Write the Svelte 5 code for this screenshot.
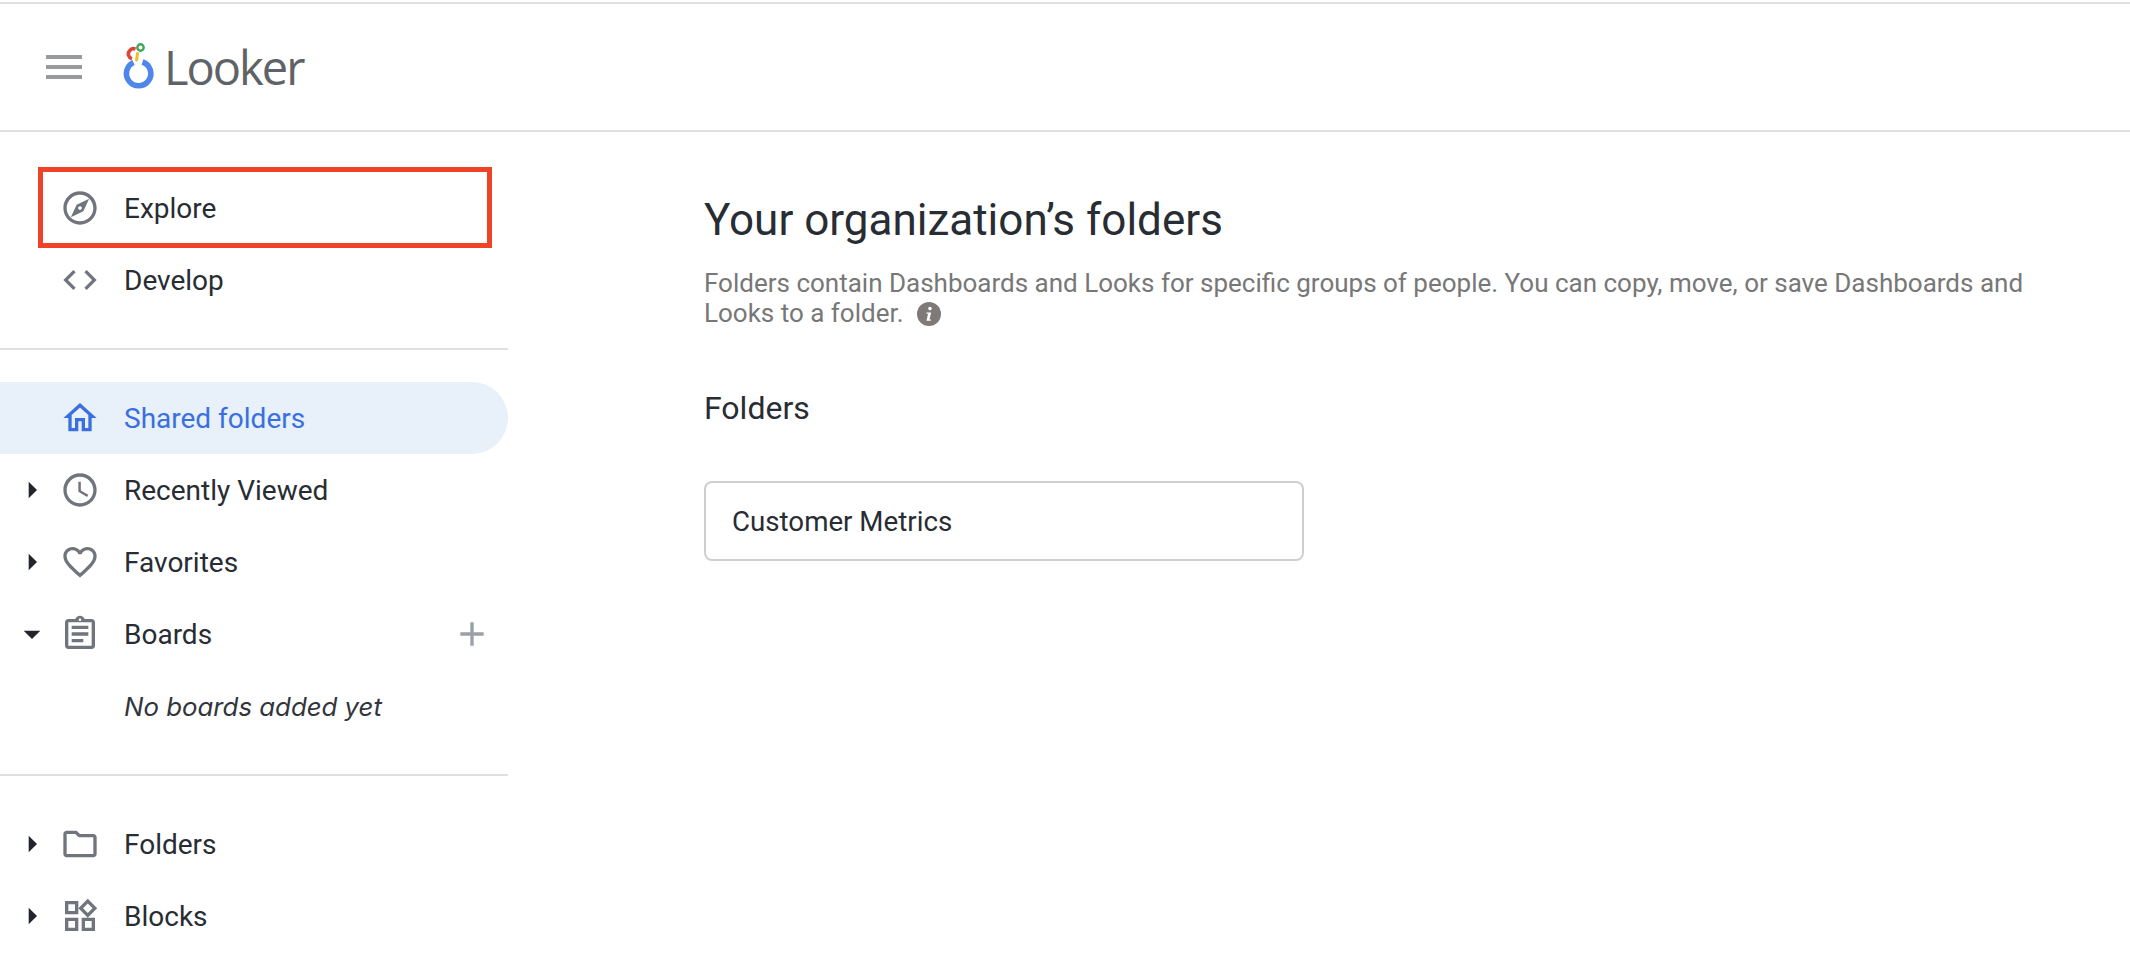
<script>
  const icons = {
    explore: "M12 2C6.48 2 2 6.48 2 12s4.48 10 10 10 10-4.48 10-10S17.52 2 12 2zm0 18c-4.41 0-8-3.59-8-8s3.59-8 8-8 8 3.59 8 8-3.59 8-8 8zm-5.5-2.5l7.51-3.49L17.5 6.5 9.99 9.99 6.5 17.5zm5.5-6.6c.61 0 1.1.49 1.1 1.1s-.49 1.1-1.1 1.1-1.1-.49-1.1-1.1.49-1.1 1.1-1.1z",
    code: "M9.4 16.6L4.8 12l4.6-4.6L8 6l-6 6 6 6 1.4-1.4zm5.2 0l4.6-4.6-4.6-4.6L16 6l6 6-6 6-1.4-1.4z",
    home: "M12 5.69l5 4.5V18h-2v-6H9v6H7v-7.81l5-4.5M12 3L2 12h3v8h6v-6h2v6h6v-8h3L12 3z",
    clock: "M11.99 2C6.47 2 2 6.48 2 12s4.47 10 9.99 10C17.52 22 22 17.52 22 12S17.52 2 11.99 2zM12 20c-4.42 0-8-3.58-8-8s3.58-8 8-8 8 3.58 8 8-3.58 8-8 8zm.5-13H11v6l5.25 3.15.75-1.23-4.5-2.67z",
    heart: "M16.5 3c-1.74 0-3.41.81-4.5 2.09C10.91 3.81 9.24 3 7.5 3 4.42 3 2 5.42 2 8.5c0 3.78 3.4 6.86 8.55 11.54L12 21.35l1.45-1.32C18.6 15.36 22 12.28 22 8.5 22 5.42 19.58 3 16.5 3zm-4.4 15.55l-.1.1-.1-.1C7.14 14.24 4 11.39 4 8.5 4 6.5 5.5 5 7.5 5c1.54 0 3.04.99 3.57 2.36h1.87C13.46 5.99 14.96 5 16.5 5c2 0 3.5 1.5 3.5 3.5 0 2.89-3.14 5.74-7.9 10.05z",
    board: "M7 15h7v2H7zm0-4h10v2H7zm0-4h10v2H7zm12-4h-4.18C14.4 1.84 13.3 1 12 1c-1.3 0-2.4.84-2.82 2H5c-1.1 0-2 .9-2 2v14c0 1.1.9 2 2 2h14c1.1 0 2-.9 2-2V5c0-1.1-.9-2-2-2zm-7-.25c.41 0 .75.34.75.75s-.34.75-.75.75-.75-.34-.75-.75.34-.75.75-.75zM19 19H5V5h14v14z",
    folder: "M9.17 6l2 2H20v10H4V6h5.17M10 4H4c-1.1 0-1.99.9-1.99 2L2 18c0 1.1.9 2 2 2h16c1.1 0 2-.9 2-2V8c0-1.1-.9-2-2-2h-8l-2-2z",
    blocks: "M16.66 4.52l2.83 2.83-2.83 2.83-2.83-2.83 2.83-2.83M9 5v4H5V5h4m10 10v4h-4v-4h4M9 15v4H5v-4h4m7.66-13.31L11 7.34 16.66 13l5.66-5.66-5.66-5.65zM11 3H3v8h8V3zm10 10h-8v8h8v-8zm-10 0H3v8h8v-8z"
  };

  const library = [
    { label: "Shared folders", icon: "home", active: true },
    { label: "Recently Viewed", icon: "clock", caret: "right" },
    { label: "Favorites", icon: "heart", caret: "right" },
    { label: "Boards", icon: "board", caret: "down", add: true }
  ];
  const content = [
    { label: "Folders", icon: "folder", caret: "right" },
    { label: "Blocks", icon: "blocks", caret: "right" }
  ];
</script>

{#snippet row(item)}
  <div class="row" class:active={item.active}>
    <span class="caret">
      {#if item.caret === "right"}
        <svg viewBox="0 0 24 24"><path d="M10 17l5-5-5-5v10z" /></svg>
      {:else if item.caret === "down"}
        <svg viewBox="0 0 24 24"><path d="M7 10l5 5 5-5z" /></svg>
      {/if}
    </span>
    <svg class="icon" viewBox="0 0 24 24"><path d={icons[item.icon]} /></svg>
    <span class="label">{item.label}</span>
    {#if item.add}
      <svg class="add" viewBox="0 0 24 24"><path d="M19 13h-6v6h-2v-6H5v-2h6V5h2v6h6v2z" /></svg>
    {/if}
  </div>
{/snippet}

<div class="page">
  <header>
    <svg class="menu" viewBox="0 0 24 24"><path d="M3 18h18v-2H3v2zm0-5h18v-2H3v2zm0-7v2h18V6H3z" /></svg>
    <div class="logo">
      <svg viewBox="0 0 34 52" width="34" height="52">
        <path d="M11.5 21.5A12.2 12.2 0 1 0 20.5 21" fill="none" stroke="#4f86ec" stroke-width="5.6" />
        <path d="M13.5 8.2a5 5 0 0 0-6 1.6 5 5 0 0 0 2.5 8" fill="none" stroke="#dc4437" stroke-width="3.6" />
        <path d="M15.5 12.5L14.6 19" fill="none" stroke="#f4b92f" stroke-width="3" stroke-linecap="round" />
        <circle cx="18.5" cy="6.5" r="3.2" fill="none" stroke="#3fa557" stroke-width="2.4" />
      </svg>
      <span>Looker</span>
    </div>
  </header>

  <div class="body">
    <nav>
      <section>
        <div class="marked">
          {@render row({ label: "Explore", icon: "explore" })}
          <div class="callout"></div>
        </div>
        {@render row({ label: "Develop", icon: "code" })}
      </section>
      <section>
        {#each library as item}
          {@render row(item)}
        {/each}
        <div class="row empty">No boards added yet</div>
      </section>
      <section class="last">
        {#each content as item}
          {@render row(item)}
        {/each}
      </section>
    </nav>

    <main>
      <h1>Your organization’s folders</h1>
      <p class="intro">
        Folders contain Dashboards and Looks for specific groups of people. You can copy, move, or save Dashboards and Looks to a folder.
        <svg class="info" viewBox="0 0 24 24">
          <circle cx="12" cy="12" r="12" fill="#7f7a78" />
          <circle cx="13" cy="6.6" r="1.8" fill="#fff" />
          <path d="M9.6 10.4h4.6l-1.7 7h1.5l-.3 1.4H9.4l1.7-7H9.4z" fill="#fff" />
        </svg>
      </p>
      <h2>Folders</h2>
      <div class="card">Customer Metrics</div>
    </main>
  </div>
</div>

<style>
  :global(body) {
    margin: 0;
    background: #fff;
  }

  .page {
    font-family: Roboto, sans-serif;
    color: #282c33;
    padding-top: 2px;
  }

  header {
    display: flex;
    align-items: center;
    height: 126px;
    padding-left: 40px;
    border-top: 2px solid #dfdfe4;
    border-bottom: 2px solid #dfdfe4;
  }

  .menu {
    width: 48px;
    height: 48px;
    fill: #979b9e;
  }

  .logo {
    display: flex;
    align-items: center;
    gap: 8px;
    margin-left: 34px;
  }

  .logo span {
    font-family: "Open Sans", sans-serif;
    font-size: 47px;
    letter-spacing: -2px;
    color: #5f6368;
  }

  .body {
    display: flex;
  }

  nav {
    flex: none;
    width: 508px;
  }

  section {
    padding: 32px 0;
    border-bottom: 2px solid #dfdfe4;
  }

  section:first-child {
    padding-top: 40px;
  }

  section.last {
    border-bottom: 0;
    padding-bottom: 20px;
  }

  .marked {
    position: relative;
  }

  .callout {
    position: absolute;
    left: 38px;
    top: -5px;
    width: 454px;
    height: 81px;
    box-sizing: border-box;
    border: 5px solid #ee4327;
  }

  .row {
    display: flex;
    align-items: center;
    height: 72px;
    padding-left: 12px;
    padding-right: 16px;
    font-size: 28px;
  }

  .row.active {
    background: #e8f0fa;
    color: #3a6fe0;
    border-radius: 0 36px 36px 0;
  }

  .row.empty {
    padding-left: 124px;
    font-family: Inter, sans-serif;
    font-size: 25.8px;
    font-style: italic;
    color: #32363c;
  }

  .caret {
    flex: none;
    width: 40px;
    height: 40px;
    margin-right: 8px;
  }

  .caret svg {
    display: block;
    fill: #22262c;
  }

  .icon {
    flex: none;
    width: 40px;
    height: 40px;
    fill: #70757d;
    margin-right: 24px;
  }

  .active .icon {
    fill: #3a6fe0;
  }

  .add {
    width: 40px;
    height: 40px;
    margin-left: auto;
    fill: #9aa0a6;
  }

  main {
    flex: 1;
    padding: 62px 0 0 196px;
  }

  h1 {
    margin: 0;
    font-size: 44px;
    line-height: 52px;
    font-weight: 400;
  }

  .intro {
    margin: 22px 0 0;
    max-width: 1340px;
    font-size: 26px;
    line-height: 30px;
    color: #777;
  }

  .info {
    width: 24px;
    height: 24px;
    margin-left: 7px;
    vertical-align: -4px;
  }

  h2 {
    margin: 62px 0 0;
    font-size: 32px;
    line-height: 36px;
    font-weight: 400;
  }

  .card {
    display: flex;
    align-items: center;
    box-sizing: border-box;
    width: 600px;
    height: 80px;
    margin-top: 55px;
    padding-left: 26px;
    border: 2px solid #cfcfcf;
    border-radius: 8px;
    font-size: 27.7px;
  }
</style>
